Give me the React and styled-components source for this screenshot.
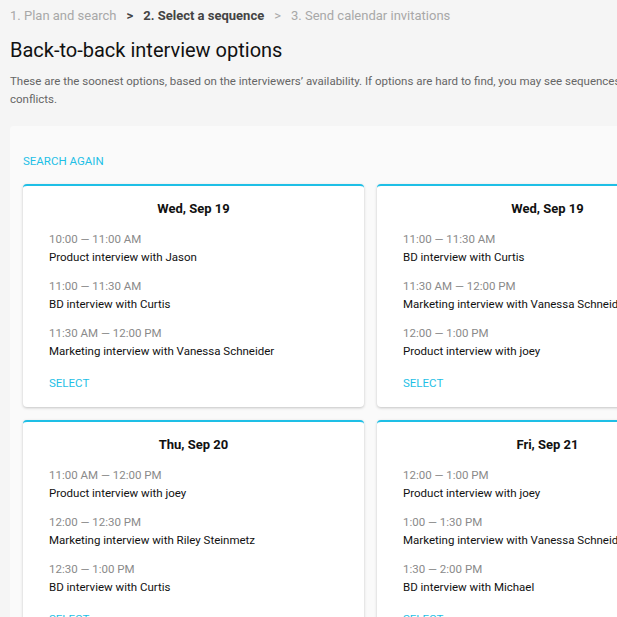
import React from "react";
import styled, { createGlobalStyle } from "styled-components";

const colors = {
  page: "#f5f5f5",
  panel: "#fafafa",
  accent: "#1ebfe6",
  dark: "#111",
  mid: "#444",
  light: "#a8a8a8",
  time: "#8a8a8a"
};

const GlobalStyle = createGlobalStyle`
  html, body {
    margin: 0;
    padding: 0;
    background: ${colors.page};
    overflow: hidden;
  }
  body {
    font-family: Roboto, "Liberation Sans", sans-serif;
  }
`;

const Page = styled.div`
  width: 740px;
  padding: 6px 10px 0;
`;

const Crumbs = styled.div`
  display: flex;
  align-items: center;
  gap: 8px;
  font-size: 13px;
  line-height: 20px;
  color: ${colors.light};
`;

const Crumb = styled.span`
  color: ${p => (p.active ? colors.mid : colors.light)};
  font-weight: ${p => (p.active ? 700 : 400)};
`;

const Sep = styled.span`
  color: ${p => (p.dark ? colors.mid : colors.light)};
  font-weight: ${p => (p.dark ? 700 : 400)};
  padding: 0 2px;
`;

const Title = styled.h1`
  margin: 10px 0 0;
  font-size: 20px;
  line-height: 28px;
  font-weight: 400;
  color: ${colors.dark};
`;

const Description = styled.p`
  margin: 8px 0 0;
  width: 665px;
  font-size: 11.5px;
  line-height: 18px;
  color: #666;
`;

const Panel = styled.div`
  margin-top: 18px;
  width: 721px;
  padding: 26px 13px 13px;
  box-sizing: border-box;
  background: ${colors.panel};
  border-radius: 4px;
`;

const LinkButton = styled.div`
  font-size: 11.5px;
  line-height: 18px;
  color: ${colors.accent};
  text-transform: uppercase;
`;

const Grid = styled.div`
  margin-top: 14px;
  display: grid;
  grid-template-columns: 341px 341px;
  gap: 13px;
`;

const Card = styled.div`
  background: #fff;
  border-top: 2px solid ${colors.accent};
  border-radius: 4px;
  box-shadow: 0 1px 3px rgba(0, 0, 0, 0.22);
  padding: 13px 26px 15px;
`;

const CardDate = styled.div`
  text-align: center;
  font-size: 13px;
  line-height: 20px;
  font-weight: 700;
  color: ${colors.dark};
`;

const Slots = styled.div`
  margin-top: 11px;
  display: flex;
  flex-direction: column;
  gap: 11px;
`;

const Slot = styled.div`
  display: flex;
  flex-direction: column;
`;

const Time = styled.div`
  font-size: 11.5px;
  line-height: 18px;
  color: ${colors.time};
`;

const Name = styled.div`
  font-size: 11.5px;
  line-height: 18px;
  color: ${colors.dark};
  white-space: nowrap;
`;

const Select = styled(LinkButton)`
  margin-top: 14px;
`;

const options = [
  {
    date: "Wed, Sep 19",
    slots: [
      ["10:00 — 11:00 AM", "Product interview with Jason"],
      ["11:00 — 11:30 AM", "BD interview with Curtis"],
      ["11:30 AM — 12:00 PM", "Marketing interview with Vanessa Schneider"]
    ]
  },
  {
    date: "Wed, Sep 19",
    slots: [
      ["11:00 — 11:30 AM", "BD interview with Curtis"],
      ["11:30 AM — 12:00 PM", "Marketing interview with Vanessa Schneider"],
      ["12:00 — 1:00 PM", "Product interview with joey"]
    ]
  },
  {
    date: "Thu, Sep 20",
    slots: [
      ["11:00 AM — 12:00 PM", "Product interview with joey"],
      ["12:00 — 12:30 PM", "Marketing interview with Riley Steinmetz"],
      ["12:30 — 1:00 PM", "BD interview with Curtis"]
    ]
  },
  {
    date: "Fri, Sep 21",
    slots: [
      ["12:00 — 1:00 PM", "Product interview with joey"],
      ["1:00 — 1:30 PM", "Marketing interview with Vanessa Schneider"],
      ["1:30 — 2:00 PM", "BD interview with Michael"]
    ]
  }
];

const App = () => (
  <Page>
    <GlobalStyle />
    <Crumbs>
      <Crumb>1. Plan and search</Crumb>
      <Sep dark>&gt;</Sep>
      <Crumb active>2. Select a sequence</Crumb>
      <Sep>&gt;</Sep>
      <Crumb>3. Send calendar invitations</Crumb>
    </Crumbs>

    <Title>Back-to-back interview options</Title>
    <Description>
      These are the soonest options, based on the interviewers’ availability.
      If options are hard to find, you may see sequences with conflicts.
    </Description>

    <Panel>
      <LinkButton>Search again</LinkButton>
      <Grid>
        {options.map((opt, i) => (
          <Card key={i}>
            <CardDate>{opt.date}</CardDate>
            <Slots>
              {opt.slots.map(([time, name]) => (
                <Slot key={time}>
                  <Time>{time}</Time>
                  <Name>{name}</Name>
                </Slot>
              ))}
            </Slots>
            <Select>Select</Select>
          </Card>
        ))}
      </Grid>
    </Panel>
  </Page>
);

export default App;
